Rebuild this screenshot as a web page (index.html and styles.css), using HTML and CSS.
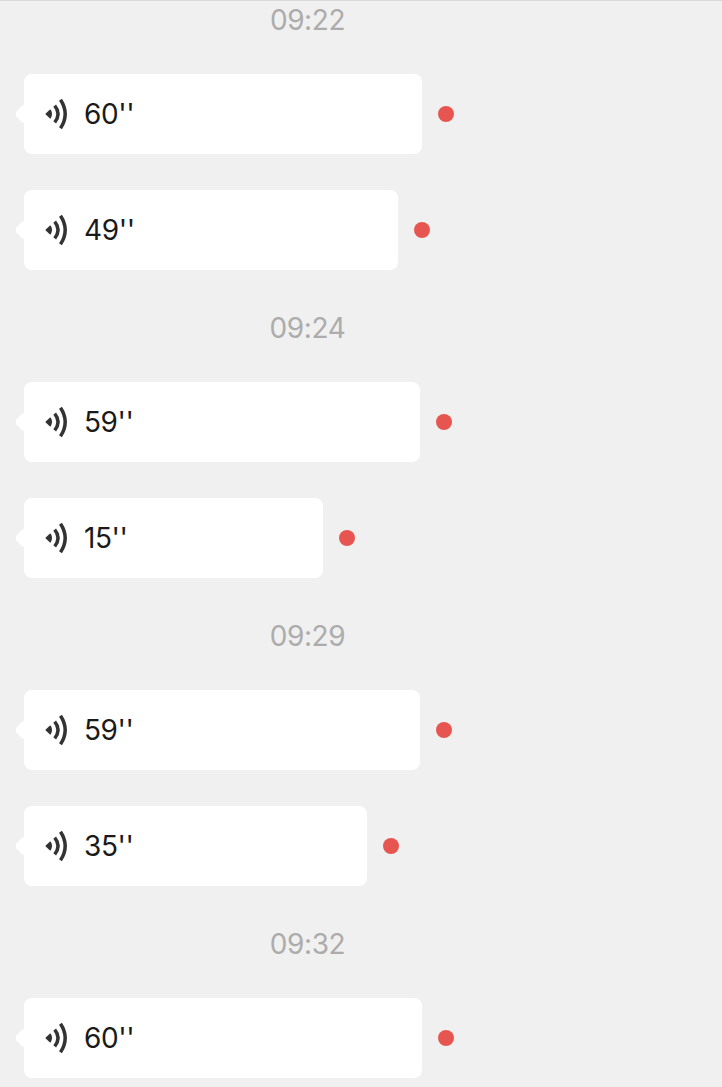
FILE: index.html
```html
<!DOCTYPE html>
<html lang="en">
<head>
<meta charset="utf-8">
<title>Voice messages</title>
<link rel="stylesheet" href="styles.css">
</head>
<body>
<svg class="defs" aria-hidden="true">
  <symbol id="voice" viewBox="0 0 24 32">
    <path d="M1.2 16 L5.2 12.2 Q7.4 16 5.2 19.8 Z" fill="#333" stroke="#333" stroke-width="1.4" stroke-linejoin="round"/>
    <path d="M9.7 7.7 Q16.4 16 9.7 24.3" fill="none" stroke="#333" stroke-width="3.5"/>
    <path d="M15.5 1.7 Q24.9 16 15.5 30.3" fill="none" stroke="#333" stroke-width="3.5"/>
  </symbol>
</svg>
<main class="chat">
  <section class="group">
    <time class="stamp">09:22</time>
    <div class="message"><div class="bubble w60"><svg class="icon"><use href="#voice"/></svg><span class="length">60''</span></div><i class="unread"></i></div>
    <div class="message"><div class="bubble w49"><svg class="icon"><use href="#voice"/></svg><span class="length">49''</span></div><i class="unread"></i></div>
  </section>
  <section class="group">
    <time class="stamp">09:24</time>
    <div class="message"><div class="bubble w59"><svg class="icon"><use href="#voice"/></svg><span class="length">59''</span></div><i class="unread"></i></div>
    <div class="message"><div class="bubble w15"><svg class="icon"><use href="#voice"/></svg><span class="length">15''</span></div><i class="unread"></i></div>
  </section>
  <section class="group">
    <time class="stamp">09:29</time>
    <div class="message"><div class="bubble w59"><svg class="icon"><use href="#voice"/></svg><span class="length">59''</span></div><i class="unread"></i></div>
    <div class="message"><div class="bubble w35"><svg class="icon"><use href="#voice"/></svg><span class="length">35''</span></div><i class="unread"></i></div>
  </section>
  <section class="group">
    <time class="stamp">09:32</time>
    <div class="message"><div class="bubble w60"><svg class="icon"><use href="#voice"/></svg><span class="length">60''</span></div><i class="unread"></i></div>
  </section>
</main>
</body>
</html>
```
FILE: styles.css
```css
* { box-sizing: border-box; }

body {
  margin: 0;
  background: #f0f0f0;
  font-family: Inter, "Liberation Sans", sans-serif;
  font-size: 28px;
  letter-spacing: -0.4px;
}

.defs {
  display: block;
  width: 0;
  height: 0;
}

.chat {
  height: 1087px;
  overflow: hidden;
  box-shadow: inset 0 1px #d9d9d9;
}

.group {
  width: 615px;
  height: 308px;
}

.stamp {
  display: block;
  margin-bottom: 34px;
  line-height: 40px;
  color: #acacac;
  text-align: center;
}

.message {
  display: flex;
  align-items: center;
  gap: 16px;
  margin: 0 0 36px 24px;
}

.bubble {
  position: relative;
  display: flex;
  align-items: center;
  height: 80px;
  padding-left: 21px;
  border-radius: 8px;
  background: #fff;
}

.bubble::before {
  content: "";
  position: absolute;
  left: -7px;
  top: 32px;
  width: 16px;
  height: 16px;
  border-radius: 5px;
  background: #fff;
  transform: rotate(45deg);
}

.icon {
  width: 24px;
  height: 32px;
}

.length {
  margin-left: 15px;
  color: #1a1a1a;
}

.w60 { width: 398px; }
.w59 { width: 396px; }
.w49 { width: 374px; }
.w35 { width: 343px; }
.w15 { width: 299px; }

.unread {
  width: 16px;
  height: 16px;
  border-radius: 50%;
  background: #e65550;
}
```
